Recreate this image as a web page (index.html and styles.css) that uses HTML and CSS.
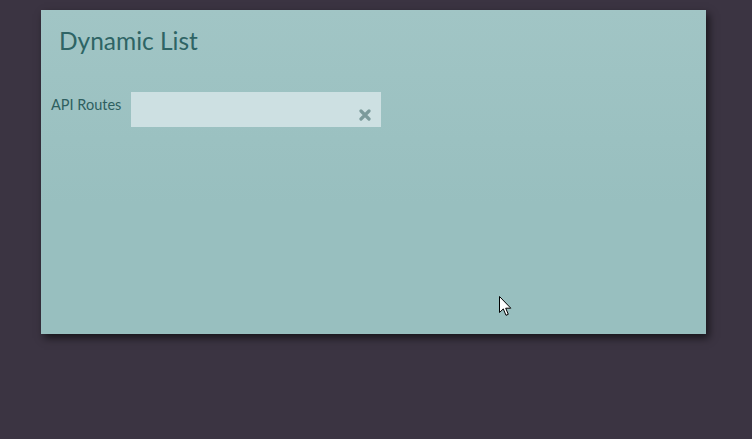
FILE: index.html
```html
<!DOCTYPE html>
<html>
<head>
<meta charset="utf-8">
<link rel="stylesheet" href="styles.css">
</head>
<body>
<div class="panel">
  <h1 class="title">Dynamic List</h1>
  <div class="field">
    <label class="label">API Routes</label>
    <div class="input">
      <svg class="clear" width="12" height="12" viewBox="0 0 12 12"><path d="M2 2 L10 10 M10 2 L2 10" stroke="#7b9a9b" stroke-width="3.2" stroke-linecap="round"/></svg>
    </div>
  </div>
  <svg class="cursor" width="13" height="21" viewBox="0 0 13 21"><path d="M0.5 0.5 L0.5 16.5 L4.3 12.9 L7 19.3 L9.3 18.3 L6.7 12.2 L11.8 12.2 Z" fill="#fff" stroke="#000" stroke-width="1" stroke-linejoin="miter"/></svg>
</div>
</body>
</html>
```
FILE: styles.css
```css
html, body {
  margin: 0;
  padding: 0;
}
body {
  background: #3b3442;
  width: 752px;
  height: 439px;
  overflow: hidden;
  padding: 10px 0 0 41px;
  box-sizing: border-box;
  font-family: Lato, "Open Sans", sans-serif;
}
.panel {
  position: relative;
  width: 665px;
  height: 324px;
  background: linear-gradient(#a1c5c5, #98bfbf 60%);
  box-shadow: 3px 4px 8px rgba(0,0,0,0.6);
  box-sizing: border-box;
  padding: 17px 10px 0 10px;
}
.title {
  margin: 0 0 0 8px;
  font-size: 24.5px;
  font-weight: normal;
  color: #2e6465;
  line-height: 28px;
}
.field {
  display: flex;
  align-items: flex-start;
  margin-top: 37px;
}
.label {
  font-size: 14.5px;
  color: #2e5f60;
  line-height: 18px;
  width: 80px;
  margin-top: 4px;
}
.input {
  width: 250px;
  height: 35px;
  background: #cde0e2;
  display: flex;
  align-items: center;
  justify-content: flex-end;
  padding-right: 10px;
  box-sizing: border-box;
}
.clear {
  margin-top: 10px;
}
.cursor {
  position: absolute;
  left: 458px;
  top: 286px;
}
```
